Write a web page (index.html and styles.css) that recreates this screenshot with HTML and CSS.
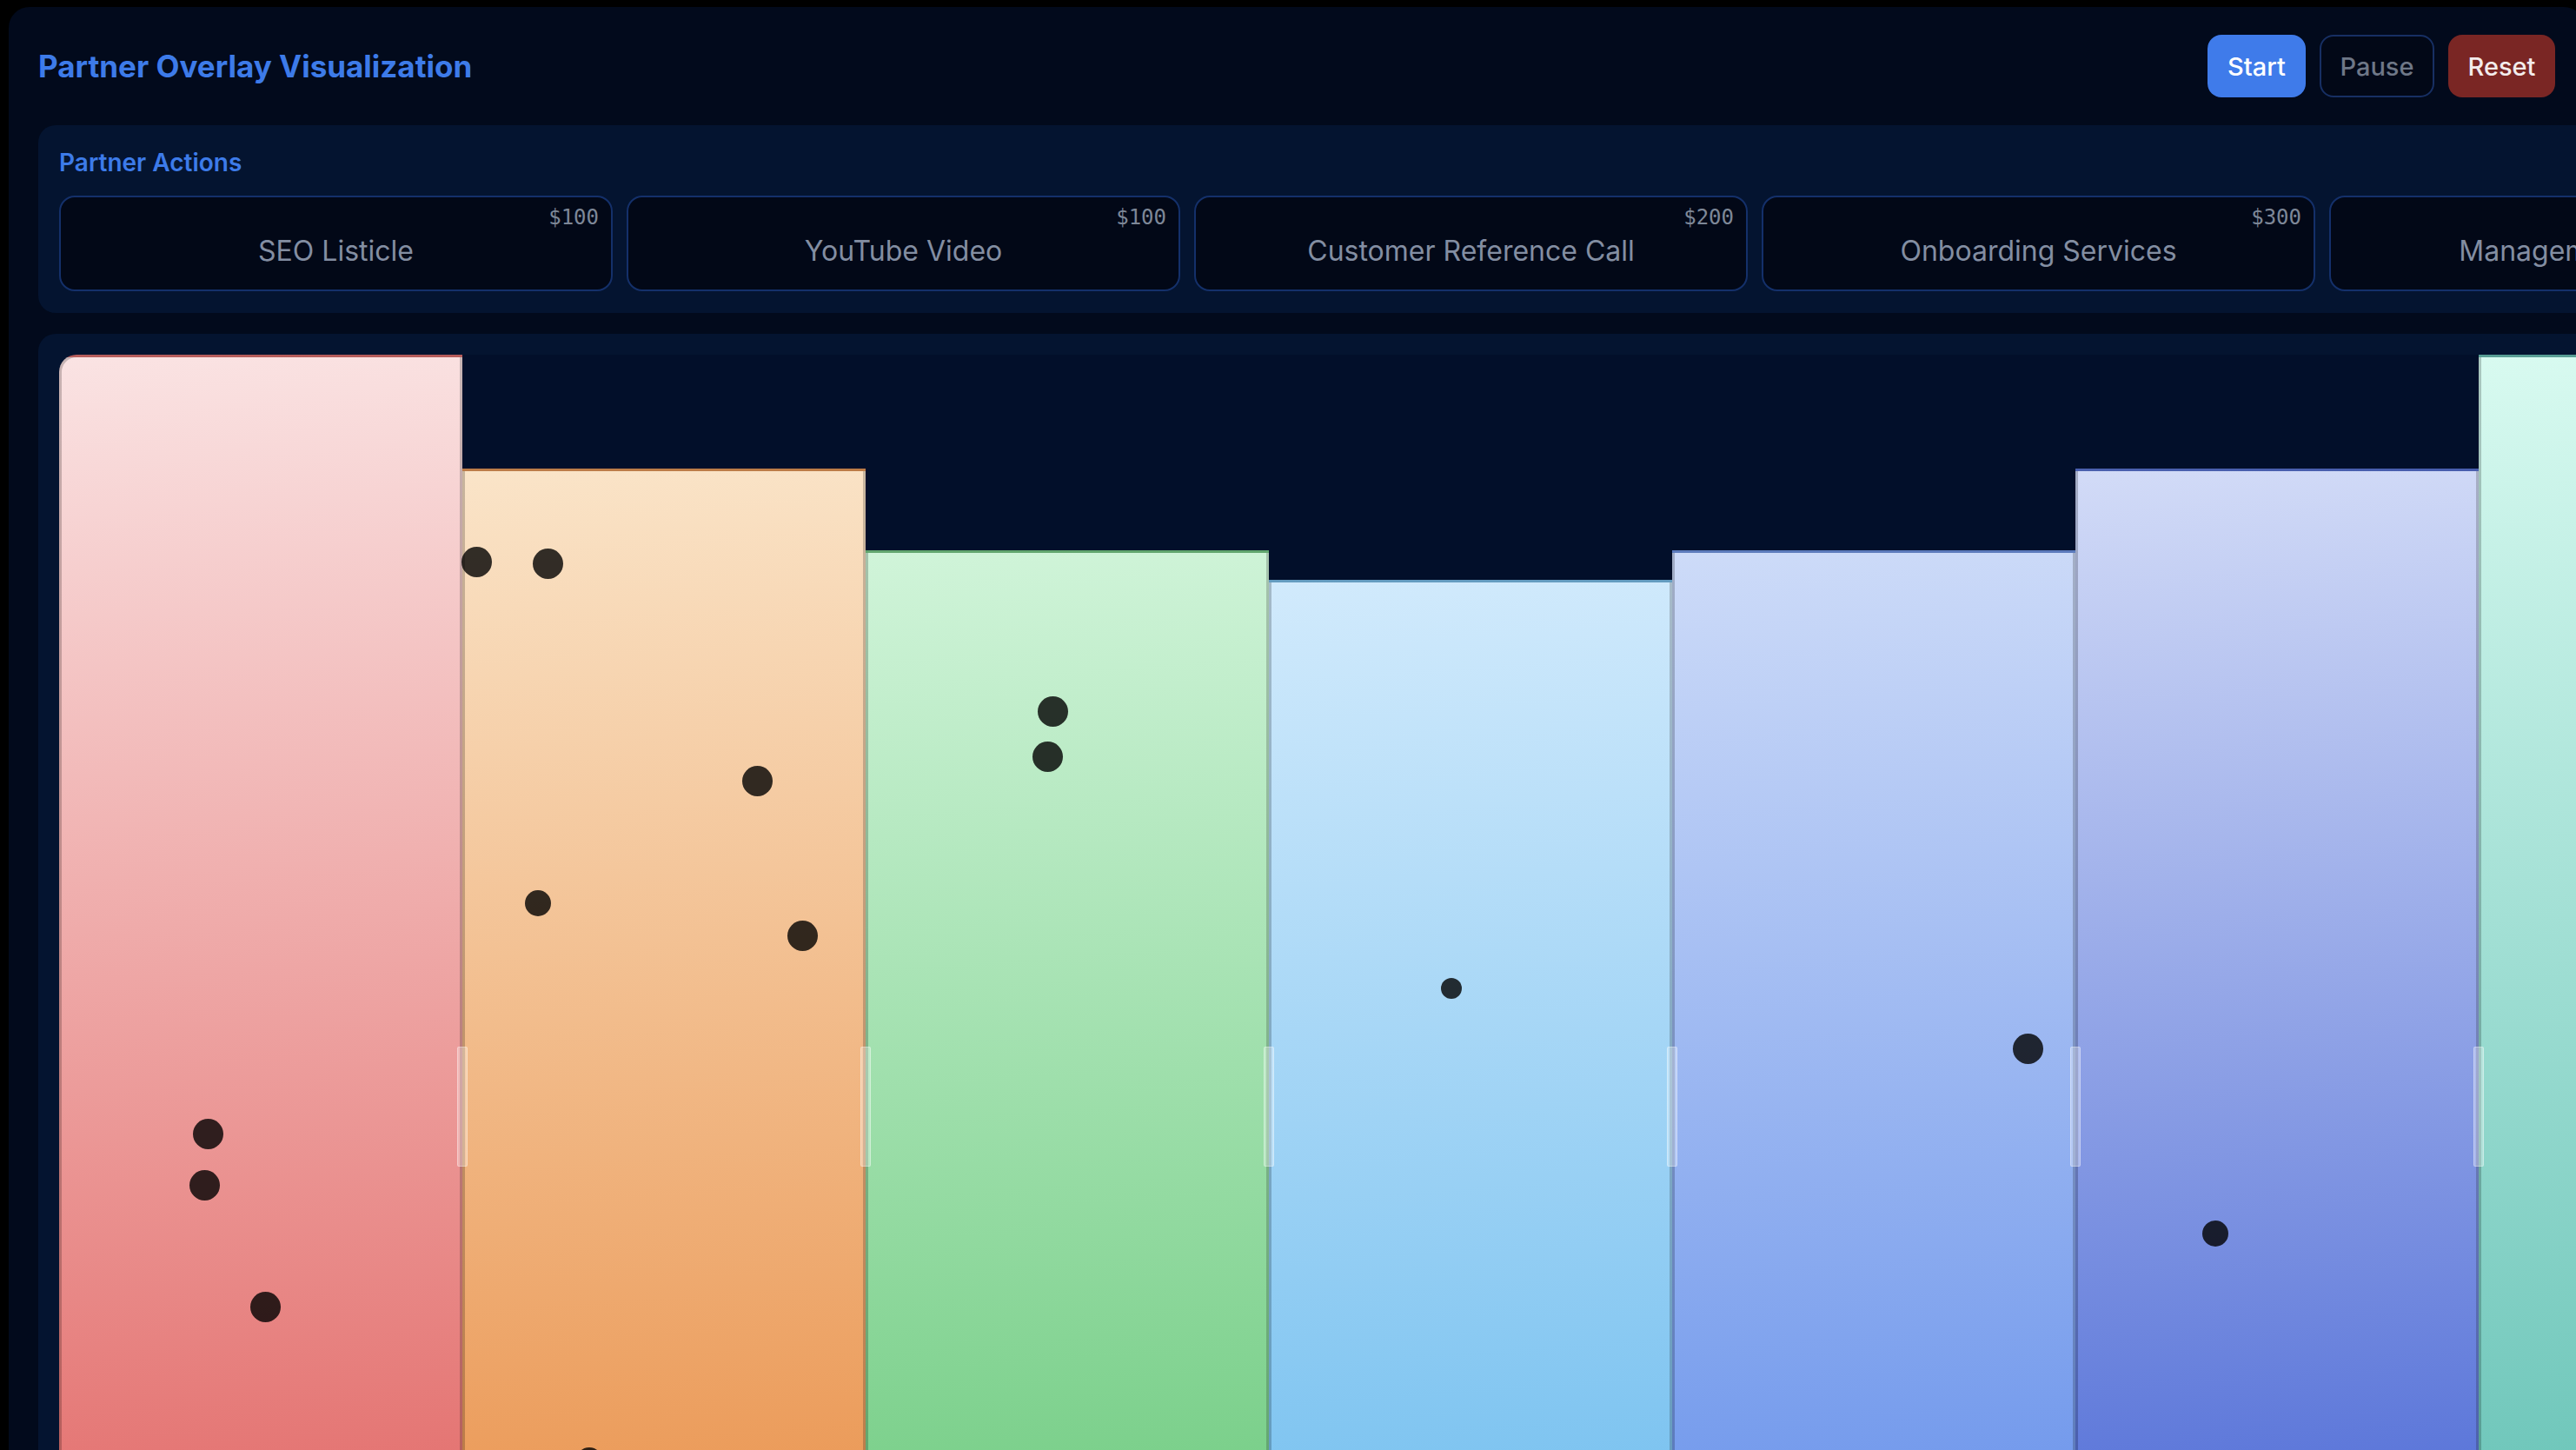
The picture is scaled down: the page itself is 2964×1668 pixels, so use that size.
FILE: index.html
```html
<!DOCTYPE html>
<html lang="en">
<head>
<meta charset="utf-8">
<title>Partner Overlay Visualization</title>
<link rel="stylesheet" href="styles.css">
</head>
<body>
<div class="app">
  <header class="topbar">
    <h1 class="title">Partner Overlay Visualization</h1>
    <div class="controls">
      <button class="btn btn-start">Start</button>
      <button class="btn btn-pause">Pause</button>
      <button class="btn btn-reset">Reset</button>
    </div>
  </header>

  <section class="actions">
    <h2 class="actions-label">Partner Actions</h2>
    <div class="cards">
      <div class="card"><span class="price">$100</span><span class="name">SEO Listicle</span></div>
      <div class="card"><span class="price">$100</span><span class="name">YouTube Video</span></div>
      <div class="card"><span class="price">$200</span><span class="name">Customer Reference Call</span></div>
      <div class="card"><span class="price">$300</span><span class="name">Onboarding Services</span></div>
      <div class="card"><span class="price">$500</span><span class="name">Management Services</span></div>
    </div>
  </section>

  <section class="chart-panel">
    <div class="chart">
      <div class="bar bar-red" style="height:1292px"><span class="handle"></span></div>
      <div class="bar bar-orange" style="height:1161px"><span class="handle"></span></div>
      <div class="bar bar-green" style="height:1067px"><span class="handle"></span></div>
      <div class="bar bar-sky" style="height:1033px"><span class="handle"></span></div>
      <div class="bar bar-blue" style="height:1067px"><span class="handle"></span></div>
      <div class="bar bar-indigo" style="height:1161px"><span class="handle"></span></div>
      <div class="bar bar-teal" style="height:1292px"><span class="handle"></span></div>

      <span class="dot dot-lg" style="left:463px;top:221px"></span>
      <span class="dot dot-lg" style="left:545px;top:223px"></span>
      <span class="dot dot-lg" style="left:786px;top:473px"></span>
      <span class="dot dot-md" style="left:536px;top:616px"></span>
      <span class="dot dot-lg" style="left:838px;top:651px"></span>
      <span class="dot dot-lg" style="left:1126px;top:393px"></span>
      <span class="dot dot-lg" style="left:1120px;top:445px"></span>
      <span class="dot dot-sm" style="left:1590px;top:717px"></span>
      <span class="dot dot-lg" style="left:2248px;top:781px"></span>
      <span class="dot dot-md" style="left:2466px;top:996px"></span>
      <span class="dot dot-lg" style="left:154px;top:879px"></span>
      <span class="dot dot-lg" style="left:150px;top:938px"></span>
      <span class="dot dot-lg" style="left:220px;top:1078px"></span>
      <span class="dot dot-md" style="left:595px;top:1257px"></span>
    </div>
  </section>
</div>
</body>
</html>
```

FILE: styles.css
```css
html, body {
  margin: 0;
  overflow: hidden;
  background: #000;
}

body {
  padding: 8px 0 0 10px;
  font-family: Inter, "Noto Sans", "Liberation Sans", sans-serif;
}

.app {
  box-sizing: border-box;
  width: 2964px;
  min-height: 1700px;
  padding: 32px 34px;
  background: #020a1c;
  border-radius: 24px;
}

.topbar {
  display: flex;
  align-items: center;
  justify-content: space-between;
  height: 72px;
}

.title {
  margin: 0;
  font-size: 35px;
  font-weight: 700;
  color: #3d7be9;
}

.controls {
  display: flex;
  gap: 16px;
}

.btn {
  box-sizing: border-box;
  height: 72px;
  padding: 0;
  border-radius: 16px;
  border: 2px solid transparent;
  font-family: Inter, "Noto Sans", sans-serif;
  font-size: 29px;
  font-weight: 500;
  cursor: pointer;
}

.btn-start {
  background: #3f7bea;
  color: #ffffff;
  width: 113px;
}

.btn-pause {
  background: #020817;
  border-color: #172f63;
  color: #6e7787;
  width: 132px;
}

.btn-reset {
  background: #7a2624;
  color: #f3ecec;
  width: 123px;
}

.actions {
  box-sizing: border-box;
  width: max-content;
  margin-top: 32px;
  padding: 24px 24px 25px;
  background: #041430;
  border-radius: 20px;
}

.actions-label {
  margin: 0 0 18px;
  font-size: 28px;
  line-height: 39px;
  font-weight: 600;
  color: #3d7be9;
}

.cards {
  display: flex;
  gap: 16px;
}

.card {
  box-sizing: border-box;
  width: 637px;
  height: 110px;
  flex-shrink: 0;
  display: flex;
  flex-direction: column;
  padding: 9px 14px;
  background: #020817;
  border: 2px solid #14306a;
  border-radius: 18px;
}

.price {
  align-self: flex-end;
  font-family: "DejaVu Sans Mono", "Liberation Mono", monospace;
  font-size: 24px;
  line-height: 28px;
  color: #7d8797;
}

.name {
  margin-top: 6px;
  text-align: center;
  font-size: 32px;
  line-height: 38px;
  color: #838ea2;
}

.chart-panel {
  box-sizing: border-box;
  width: max-content;
  margin-top: 24px;
  padding: 24px;
  background: #041430;
  border-radius: 20px;
}

.chart {
  position: relative;
  display: flex;
  align-items: flex-end;
  height: 1292px;
  background: #020f2a;
  border-radius: 20px 20px 0 0;
}

.bar {
  position: relative;
  box-sizing: border-box;
  width: 464px;
  flex-shrink: 0;
  border: 3px solid rgba(0, 0, 0, 0.2);
  border-bottom: none;
}

.bar:first-child {
  border-top-left-radius: 20px;
}

.handle {
  position: absolute;
  right: -9px;
  bottom: 358px;
  z-index: 2;
  box-sizing: border-box;
  width: 12px;
  height: 138px;
  background: rgba(255, 255, 255, 0.32);
  border: 1px solid rgba(255, 255, 255, 0.3);
  border-radius: 2px;
}

.bar-red    { background: linear-gradient(176deg, #fae3e3 0%, #e47371 100%); }
.bar-orange { background: linear-gradient(176deg, #fae4c8 0%, #eb9a58 100%); }
.bar-green  { background: linear-gradient(176deg, #d0f4d9 0%, #79cf89 100%); }
.bar-sky    { background: linear-gradient(176deg, #d1eafc 0%, #7cc3f0 100%); }
.bar-blue   { background: linear-gradient(176deg, #cddbf8 0%, #7299ec 100%); }
.bar-indigo { background: linear-gradient(176deg, #d2dbf7 0%, #5a75d9 100%); }
.bar-teal   { background: linear-gradient(176deg, #d8faf0 0%, #6cc5b9 100%); }

.dot {
  position: absolute;
  z-index: 3;
  border-radius: 50%;
  background: rgba(0, 0, 0, 0.8);
}

.dot-lg { width: 35px; height: 35px; }
.dot-md { width: 30px; height: 30px; }
.dot-sm { width: 24px; height: 24px; }
```
